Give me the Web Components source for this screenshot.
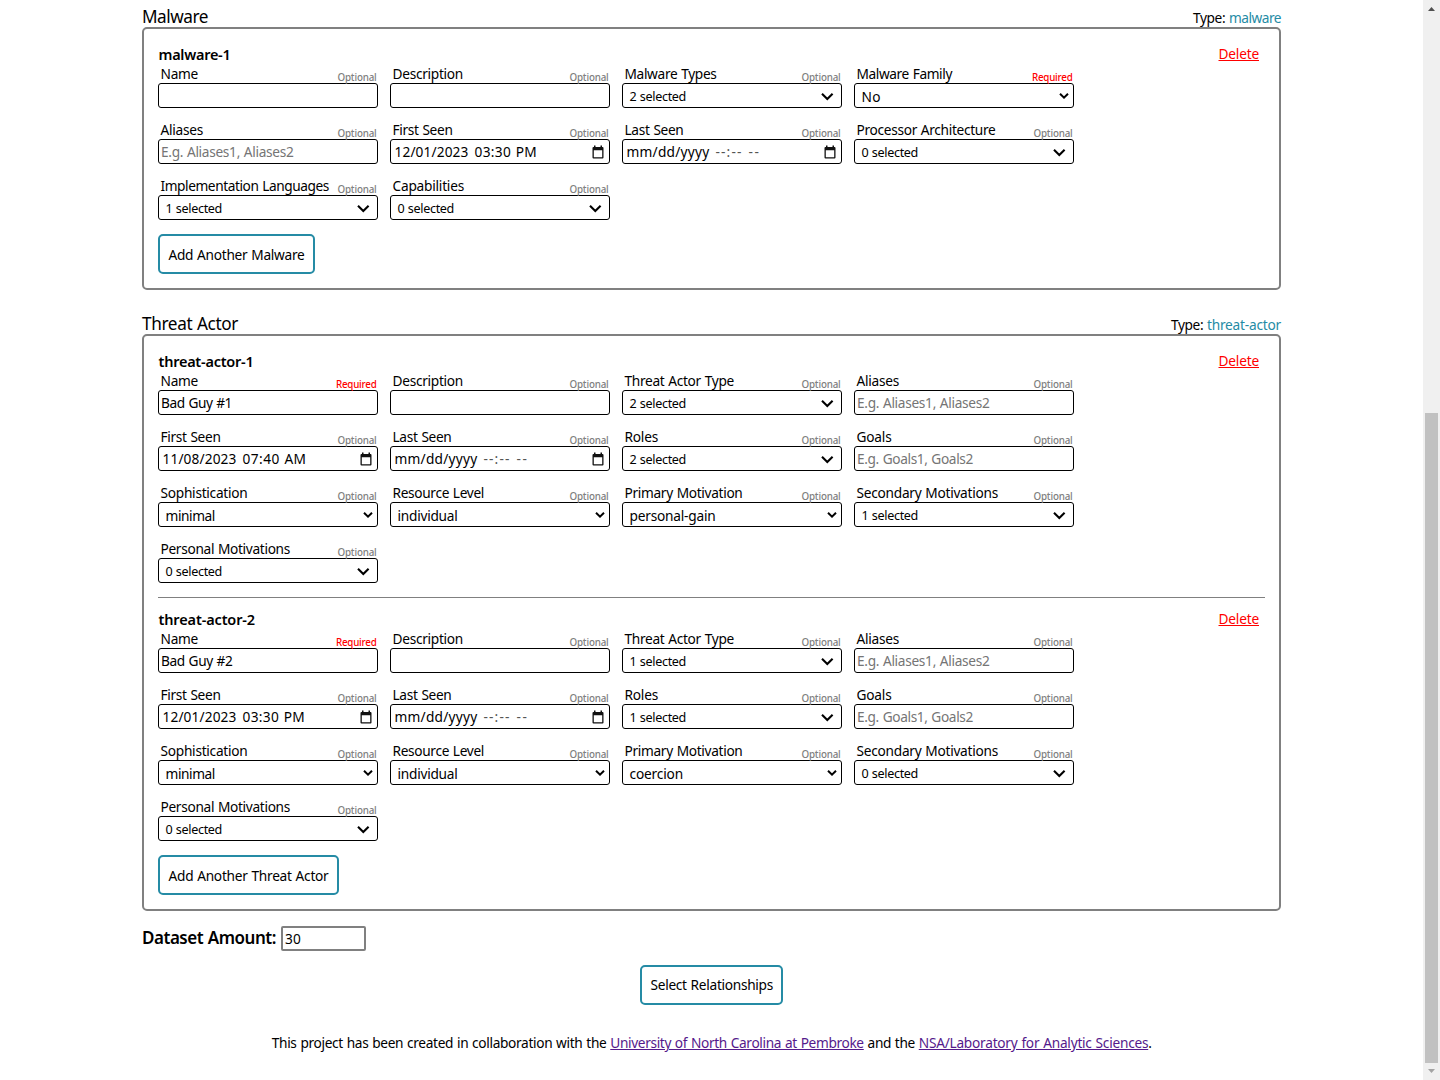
<!DOCTYPE html>
<html lang="en">
<head>
<meta charset="utf-8">
<title>Dataset Builder</title>
<style>
html,body{margin:0;height:100%;overflow:hidden;background:#fff}
body{font:13.7px/20px "Noto Sans","Open Sans",sans-serif;word-spacing:.6px;color:#000}
</style>
</head>
<body>
<dataset-app></dataset-app>
<script>
// Inline text tracked out or in to a given advance width.
class FitText extends HTMLElement{
  connectedCallback(){
    if(this.shadowRoot)return;
    this.attachShadow({mode:'open'}).innerHTML='<style>:host{display:inline;white-space:pre}</style><slot></slot>';
    const w=+this.getAttribute('w');
    if(w){const n=this.getBoundingClientRect().width;this.style.letterSpacing=((w-n)/this.textContent.length)+'px';}
  }
}
customElements.define('fit-text',FitText);
const W={'Name':37.5,'Description':70.5,'Malware Types':92,'Malware Family':95.5,'Aliases':42.5,'First Seen':60,'Last Seen':59,'Processor Architecture':139,'Implementation Languages':168.5,'Capabilities':71.5,'Threat Actor Type':109.5,'Roles':33.5,'Goals':35,'Sophistication':87,'Resource Level':91.5,'Primary Motivation':118,'Secondary Motivations':141.5,'Personal Motivations':129.5,
'E.g. Aliases1, Aliases2':132.500,'E.g. Goals1, Goals2':116,'No':19.5,'minimal':49.5,'individual':60,'personal-gain':86,'coercion':53.5,'Bad Guy #1':71,'Bad Guy #2':71.5,
'0 selected':56.5,'1 selected':56.5,'2 selected':56.5,'Optional':39,'Required':40.5,'malware-1':72,'threat-actor-1':95,'threat-actor-2':96.5,
'Malware':66,'Threat Actor':96,'Type: ':36,'malware':52,'threat-actor':74,'Delete':40.5,'Add Another Malware':136,'Add Another Threat Actor':160,'Select Relationships':122.5,'Dataset Amount:':134,
'12/01/2023':74,'11/08/2023':74,'03:30 PM':62.5,'07:40 AM':64,'mm/dd/yyyy':83,'--:--':27,'--':12};
const T=s=>`<fit-text w="${W[s]||''}">${s}</fit-text>`;

class FormField extends HTMLElement{
  connectedCallback(){
    if(this.shadowRoot)return;
    const k=this.getAttribute('kind'),v=this.getAttribute('value')||'',req=this.hasAttribute('required');
    let body='';
    if(k==='text')body=v?`<span class="v">${T(v)}</span>`:'';
    if(k==='hint')body=`<span class="v hint">${T(v)}</span>`;
    if(k==='multi')body=`<span class="v">${T(v)}</span><svg width="14" height="10" viewBox="0 0 14 10"><path d="M2 1.800 7.300 7 12.600 1.800" fill="none" stroke="#000" stroke-width="2.1"/></svg>`;
    if(k==='select')body=`<span class="v">${T(v)}</span><svg width="10" height="8" viewBox="0 0 10 8"><path d="M1 1.8 5 5.6 9 1.8" fill="none" stroke="#000" stroke-width="2"/></svg>`;
    if(k==='date'){
      const p=v.split('|');
      body=`<span class="v">${p.map(s=>`<span${s[0]==='-'?' class="dash"':''}>${T(s)}</span>`).join('')}</span><svg width="12" height="14" viewBox="0 0 12 14"><path d="M2 .6h1.500V2h5V.6H10V2h.5q1 0 1 1v9.500q0 1-1 1h-9q-1 0-1-1V3q0-1 1-1H2zM1.800 5.200v7h8.400v-7z" fill="#111" fill-rule="evenodd"/></svg>`;
    }
    this.attachShadow({mode:'open'}).innerHTML=`<style>
    :host{display:block;width:220px}
    .top{display:flex;justify-content:space-between;height:16px;padding:0 1.5px 0 2.5px;white-space:nowrap}
    .l{line-height:14px}
    .o{font-size:9.8px;font-weight:500;line-height:22px;color:#808080}
    .o.req{color:#f00}
    .box{box-sizing:border-box;height:25px;border:1px solid #000;border-radius:3px;display:flex;justify-content:space-between;align-items:flex-start;white-space:nowrap}
    .v{line-height:24px;padding-left:2px}
    .hint{color:#757575}
    .multi .v{font-size:12.6px;padding-left:6.5px;line-height:26px}
    .multi svg{margin:8px 7px 0 0}
    .select .v{padding-left:6.5px;line-height:26px}
    .select svg{margin:8px 4px 0 0}
    .date .v{display:flex;gap:6px;padding-left:3.5px}
    .date svg{margin:4.500px 5px 0 0}
    .dash{color:#555}
    </style><div class="top"><span class="l">${T(this.getAttribute('label'))}</span><span class="o${req?' req':''}">${T(req?'Required':'Optional')}</span></div><div class="box ${k}">${body}</div>`;
  }
}
customElements.define('form-field',FormField);

class ActionButton extends HTMLElement{
  connectedCallback(){
    if(this.shadowRoot)return;
    const t=this.getAttribute('text');
    this.attachShadow({mode:'open'}).innerHTML=`<style>
    :host{display:block}
    button{display:block;box-sizing:border-box;height:40px;margin:0;padding:0 0 0 8.5px;border:2px solid #258ba5;border-radius:5px;background:#fff;color:#000;font:inherit;word-spacing:inherit;line-height:var(--lh,37px);text-align:left;width:${this.getAttribute('width')}px}
    </style><button>${T(t)}</button>`;
  }
}
customElements.define('action-button',ActionButton);

class EntityRecord extends HTMLElement{
  connectedCallback(){
    if(this.shadowRoot)return;
    this.attachShadow({mode:'open'}).innerHTML=`<style>
    :host{display:block}
    :host([divided]){border-bottom:1px solid #808080;padding-bottom:14px;margin-bottom:10px}
    .head{display:flex;justify-content:space-between;height:24px;padding-right:6px}
    b{font-weight:600;font-size:14.5px;line-height:22px;padding-left:.5px}
    a{color:#f00;text-decoration:underline;line-height:22px}
    .grid{display:grid;grid-template-columns:repeat(4,220px);gap:15px 12px}
    </style><div class="head"><b>${T(this.getAttribute('name'))}</b><a>${T('Delete')}</a></div><div class="grid"><slot></slot></div>`;
  }
}
customElements.define('entity-record',EntityRecord);

class EntityGroup extends HTMLElement{
  connectedCallback(){
    if(this.shadowRoot)return;
    this.attachShadow({mode:'open'}).innerHTML=`<style>
    :host{display:block}
    .head{display:flex;justify-content:space-between;height:27px}
    .t{font-size:17.2px;line-height:34px}
    .y{line-height:36px}
    .y span{color:#258ba5}
    .panel{border:2px solid #808080;border-radius:5px;padding:14px}
    action-button{margin-top:14px}
    </style><div class="head"><span class="t">${T(this.getAttribute('label'))}</span><span class="y">${T('Type: ')}<span>${T(this.getAttribute('type'))}</span></span></div>
    <div class="panel"><slot></slot><action-button text="Add Another ${this.getAttribute('label')}" width="${this.getAttribute('bw')}"></action-button></div>`;
  }
}
customElements.define('entity-group',EntityGroup);

class ScrollRail extends HTMLElement{
  connectedCallback(){
    if(this.shadowRoot)return;
    this.attachShadow({mode:'open'}).innerHTML=`<style>
    :host{display:flex;flex-direction:column;align-items:center;box-sizing:border-box;width:17px;height:1080px;background:#f0f0f0;padding:7px 0 5px}
    .thumb{width:13px;height:650px;background:#c1c1c1;margin-top:402px}
    svg{display:block;flex:none}
    .d{margin-top:6px}
    </style><svg width="7" height="4"><path d="M0 4 3.500 0 7 4z" fill="#505050"/></svg><div class="thumb"></div><svg class="d" width="7" height="4"><path d="M0 0 3.500 4 7 0z" fill="#a3a3a3"/></svg>`;
  }
}
customElements.define('scroll-rail',ScrollRail);

const F=(label,kind,value='',req='')=>`<form-field label="${label}" kind="${kind}" value="${value}" ${req}></form-field>`;
const EMPTY='mm/dd/yyyy|--:--|--';
const actor=(n,guy,types,date,roles,mot,sec,div)=>`<entity-record name="threat-actor-${n}" ${div}>${
  F('Name','text',guy,'required')+F('Description','text')+F('Threat Actor Type','multi',types)+F('Aliases','hint','E.g. Aliases1, Aliases2')+
  F('First Seen','date',date)+F('Last Seen','date',EMPTY)+F('Roles','multi',roles)+F('Goals','hint','E.g. Goals1, Goals2')+
  F('Sophistication','select','minimal')+F('Resource Level','select','individual')+F('Primary Motivation','select',mot)+F('Secondary Motivations','multi',sec)+
  F('Personal Motivations','multi','0 selected')}</entity-record>`;

class DatasetApp extends HTMLElement{
  connectedCallback(){
    if(this.shadowRoot)return;
    this.attachShadow({mode:'open'}).innerHTML=`<style>
    :host{display:flex;height:1080px}
    main{flex:1;display:flex;flex-direction:column;align-items:center}
    .col{width:1139px;display:flex;flex-direction:column;gap:17px}
    .amount{display:flex;width:1139px;margin-top:15px;height:25px;gap:5px}
    .amount b{font-size:17px;font-weight:600;line-height:24px}
    .amount div{box-sizing:border-box;width:85px;height:25px;border:2px solid #808080;border-radius:2px;padding-left:2px;line-height:21px}
    .go{margin-top:14px;--lh:36px}
    footer{margin-top:28px;padding-left:1px;line-height:20px;white-space:pre}
    a{color:#551a8b;text-decoration:underline}
    </style><main><div class="col">
    <entity-group label="Malware" type="malware" bw="157"><entity-record name="malware-1">${
      F('Name','text')+F('Description','text')+F('Malware Types','multi','2 selected')+F('Malware Family','select','No','required')+
      F('Aliases','hint','E.g. Aliases1, Aliases2')+F('First Seen','date','12/01/2023|03:30 PM')+F('Last Seen','date',EMPTY)+F('Processor Architecture','multi','0 selected')+
      F('Implementation Languages','multi','1 selected')+F('Capabilities','multi','0 selected')}</entity-record></entity-group>
    <entity-group label="Threat Actor" type="threat-actor" bw="181">${
      actor(1,'Bad Guy #1','2 selected','11/08/2023|07:40 AM','2 selected','personal-gain','1 selected','divided')+
      actor(2,'Bad Guy #2','1 selected','12/01/2023|03:30 PM','1 selected','coercion','0 selected','')}</entity-group>
    </div>
    <div class="amount"><b>${T('Dataset Amount:')}</b><div><fit-text w="16">30</fit-text></div></div>
    <action-button class="go" text="Select Relationships" width="143"></action-button>
    <footer><fit-text w="338.5">This project has been created in collaboration with the </fit-text><a><fit-text w="253.5">University of North Carolina at Pembroke</fit-text></a><fit-text w="55"> and the </fit-text><a><fit-text w="229.5">NSA/Laboratory for Analytic Sciences</fit-text></a><fit-text w="4">.</fit-text></footer>
    </main><scroll-rail></scroll-rail>`;
  }
}
customElements.define('dataset-app',DatasetApp);
</script>
</body>
</html>
